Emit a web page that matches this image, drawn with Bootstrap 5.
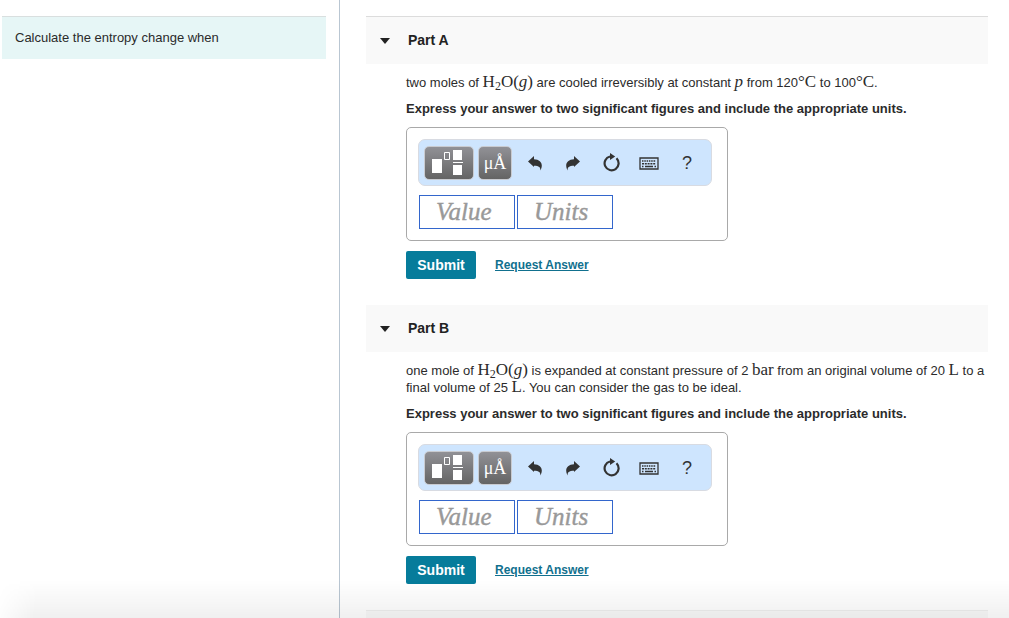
<!DOCTYPE html>
<html lang="en">
<head>
<meta charset="utf-8">
<meta name="viewport" content="width=device-width, initial-scale=1">
<title>Entropy change</title>
<link href="https://cdn.jsdelivr.net/npm/bootstrap@5.3.0/dist/css/bootstrap.min.css" rel="stylesheet">
<style>
body{font:13px/17px "Liberation Sans",Arial,sans-serif;color:#2b2b2b;background:#fff}
.intro-pane{flex:0 0 340px;padding:16px 13px 0 2px;border-right:1px solid #b9c6d2}
.intro-text{background:#e6f6f6;border-top:1px solid #d9dfdf;padding:12px 13px 13px}
.parts-pane{min-width:0;padding:16px 21px 0 26px}
.part-head{background:#f9f9f9;height:47px;padding:0 13px;gap:17px}
.part-first{border-top:1px solid #dcdcdc;height:48px}
.part-head h2{font-size:14px;line-height:17px;font-weight:700;color:#222}
.part-body{padding:10px 0 26px 40px}
.part-body p{margin-bottom:9px}
.part-body .ask{margin-bottom:10px}
.tex{font-family:"Liberation Serif","Times New Roman",serif;font-size:17px;line-height:15px}
.tex sub{font-size:12px;line-height:9px;bottom:-3px}
.answer-box{width:322px;max-width:100%;border:1px solid #a9a9a9;border-radius:5px;padding:11px}
.tools{width:294px;max-width:100%;height:47px;background:#cee5fe;border:1px solid #d8dbe2;border-radius:7px;padding:0 5px}
.tool-dark{flex-shrink:0;height:34px;border:1px solid #c9cbd0;border-radius:5px;background:linear-gradient(#919196,#646464);color:#fff;padding:0}
.tool-tpl{width:50px}
.tool-unit{width:34px;margin-left:4px;font:18px/32px "Liberation Serif",serif}
.tool-flat{width:38px;height:34px;border:0;background:none;color:#333;padding:0}
.help-mark{font-size:18px;line-height:32px}
.fields{gap:2px;margin-top:9px;padding-left:1px}
.fields input{width:96px;height:34px;border:1px solid #36c;border-radius:0;padding:0 16px;background:#fff;font:italic 25px/32px "Liberation Serif",serif}
.fields input::placeholder{color:#999;opacity:1;-webkit-text-stroke:.4px #999}
.actions{gap:19px;margin-top:10px}
.btn-send{width:70px;height:28px;border:0;border-radius:2px;background:#067c9b;color:#fff;font-size:14px;line-height:28px;font-weight:700;padding:0}
.actions a{color:#11708e;font-size:12px;line-height:14px;font-weight:700}
.page-shade{height:38px;background:linear-gradient(transparent,rgba(0,0,0,.06));-webkit-mask-image:linear-gradient(100deg,transparent,#000 40px);mask-image:linear-gradient(100deg,transparent,#000 40px);pointer-events:none}
.part-next{border-top:1px solid #efefef;min-height:47px}
</style>
</head>
<body>
<svg class="d-none" aria-hidden="true">
<symbol id="tpl" viewBox="0 0 48 32"><path fill="#fff" d="M7 12h10v14H7zM28 3h9v10h-9zM28 18h9v10h-9zM28 15h10v1H28z"/><path fill="none" stroke="#fff" d="M19.500 5.500h5v7h-5z"/></symbol>
<symbol id="undo" viewBox="0 0 14 15"><path fill="currentColor" d="M0 5.500 6 0v3.300c5 .2 8 3 7.800 6.500-.1 2-.8 3.500-1.600 4.700.5-3.200-1.200-4.700-6.200-4.700V11z"/></symbol>
<symbol id="turn" viewBox="0 0 18 19"><path fill="none" stroke="currentColor" stroke-width="2.200" d="M14.500 5.300A7 7 0 1 1 8 3.500"/><path fill="currentColor" d="M8 0l5.200 3.400L8 7z"/></symbol>
<symbol id="keys" viewBox="0 0 20 13"><path fill="none" stroke="currentColor" stroke-width="1.300" d="M1 1h18v11H1z"/><path fill="none" stroke="currentColor" stroke-width="1.500" d="M3 4h14" stroke-dasharray="1.500 .8"/><path fill="none" stroke="currentColor" stroke-width="1.500" d="M3 6.700h14" stroke-dasharray="2 .8"/><path stroke="currentColor" stroke-width="1.500" d="M3 9.400h1.500M6 9.400h8M15.500 9.400H17"/></symbol>
</svg>
<div class="d-flex vh-100 overflow-hidden">
<aside class="intro-pane"><div class="intro-text">Calculate the entropy change when</div></aside>
<main class="parts-pane flex-grow-1">
<section>
<header class="part-head part-first d-flex align-items-center"><svg width="12" height="6" viewBox="0 0 12 6" aria-hidden="true"><path fill="#222" d="M1 0h10L6 6z"/></svg><h2 class="m-0">Part A</h2></header>
<div class="part-body">
<p>two moles of <span class="tex">H<sub>2</sub>O(<i>g</i>)</span> are cooled irreversibly at constant <i class="tex">p</i> from 120<span class="tex">°C</span> to 100<span class="tex">°C</span>.</p>
<p class="ask fw-bold">Express your answer to two significant figures and include the appropriate units.</p>
<div class="answer-box">
<div class="tools d-flex align-items-center" role="toolbar" aria-label="Answer tools">
<button type="button" class="tool-dark tool-tpl" aria-label="Templates"><svg class="d-block" width="48" height="32"><use href="#tpl"/></svg></button>
<button type="button" class="tool-dark tool-unit">μÅ</button>
<div class="d-flex ms-1">
<button type="button" class="tool-flat" aria-label="Undo"><svg width="14" height="15"><use href="#undo"/></svg></button>
<button type="button" class="tool-flat" aria-label="Redo"><svg width="14" height="15"><use href="#undo" transform="matrix(-1 0 0 1 14 0)"/></svg></button>
<button type="button" class="tool-flat" aria-label="Reset"><svg width="18" height="19"><use href="#turn"/></svg></button>
<button type="button" class="tool-flat" aria-label="Keyboard"><svg width="20" height="13"><use href="#keys"/></svg></button>
<button type="button" class="tool-flat help-mark">?</button>
</div></div>
<div class="fields d-flex"><input type="text" placeholder="Value" aria-label="Value"><input type="text" placeholder="Units" aria-label="Units"></div>
</div>
<div class="actions d-flex align-items-center"><button type="button" class="btn-send">Submit</button><a href="#">Request Answer</a></div>
</div>
</section>
<section>
<header class="part-head d-flex align-items-center"><svg width="12" height="6" viewBox="0 0 12 6" aria-hidden="true"><path fill="#222" d="M1 0h10L6 6z"/></svg><h2 class="m-0">Part B</h2></header>
<div class="part-body">
<p>one mole of <span class="tex">H<sub>2</sub>O(<i>g</i>)</span> is expanded at constant pressure of 2 <span class="tex">bar</span> from an original volume of 20 <span class="tex">L</span> to a final volume of 25 <span class="tex">L</span>. You can consider the gas to be ideal.</p>
<p class="ask fw-bold">Express your answer to two significant figures and include the appropriate units.</p>
<div class="answer-box">
<div class="tools d-flex align-items-center" role="toolbar" aria-label="Answer tools">
<button type="button" class="tool-dark tool-tpl" aria-label="Templates"><svg class="d-block" width="48" height="32"><use href="#tpl"/></svg></button>
<button type="button" class="tool-dark tool-unit">μÅ</button>
<div class="d-flex ms-1">
<button type="button" class="tool-flat" aria-label="Undo"><svg width="14" height="15"><use href="#undo"/></svg></button>
<button type="button" class="tool-flat" aria-label="Redo"><svg width="14" height="15"><use href="#undo" transform="matrix(-1 0 0 1 14 0)"/></svg></button>
<button type="button" class="tool-flat" aria-label="Reset"><svg width="18" height="19"><use href="#turn"/></svg></button>
<button type="button" class="tool-flat" aria-label="Keyboard"><svg width="20" height="13"><use href="#keys"/></svg></button>
<button type="button" class="tool-flat help-mark">?</button>
</div></div>
<div class="fields d-flex"><input type="text" placeholder="Value" aria-label="Value"><input type="text" placeholder="Units" aria-label="Units"></div>
</div>
<div class="actions d-flex align-items-center"><button type="button" class="btn-send">Submit</button><a href="#">Request Answer</a></div>
</div>
</section>
<div class="part-head part-next"></div>
</main>
</div>
<div class="page-shade fixed-bottom"></div>
<script src="https://cdn.jsdelivr.net/npm/bootstrap@5.3.0/dist/js/bootstrap.bundle.min.js"></script>
</body>
</html>
